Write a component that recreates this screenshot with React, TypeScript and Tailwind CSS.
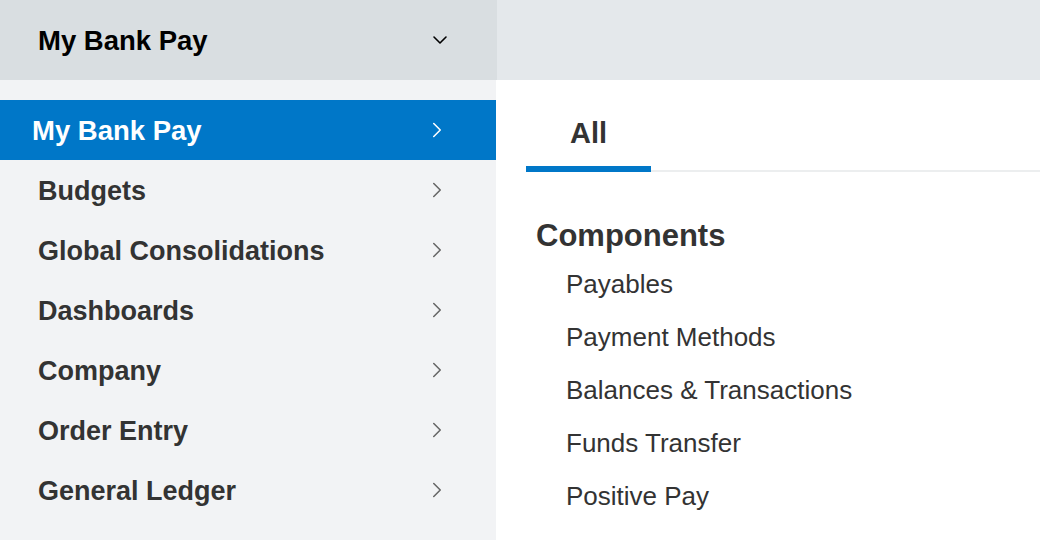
import { ChevronDown, ChevronRight } from "lucide-react";

const menu = [
  "My Bank Pay",
  "Budgets",
  "Global Consolidations",
  "Dashboards",
  "Company",
  "Order Entry",
  "General Ledger",
  "Accounts Receivable",
];

const components = [
  "Payables",
  "Payment Methods",
  "Balances & Transactions",
  "Funds Transfer",
  "Positive Pay",
];

export default function App() {
  return (
    <div
      className="flex h-[540px] w-[1040px] flex-col overflow-hidden bg-white text-[#333]"
      style={{ fontFamily: "'Liberation Sans', Arial, sans-serif" }}
    >
      {/* Top bar */}
      <header className="flex h-20 shrink-0 bg-[#e4e8eb]">
        <div className="flex w-[497px] items-center justify-between bg-[#d9dee1] pl-[38px] pr-[45px]">
          <span className="pt-[2px] text-[27.5px] font-bold text-black">My Bank Pay</span>
          <ChevronDown className="h-6 w-6 text-black" strokeWidth={1.6} />
        </div>
      </header>

      <div className="flex min-h-0 flex-1">
        {/* Sidebar */}
        <nav className="w-[496px] shrink-0 bg-[#f2f3f5] pt-5">
          {menu.map((item, i) => {
            const active = i === 0;
            return (
              <div
                key={item}
                className={`flex h-[60px] items-center justify-between pr-[46px] ${
                  active ? "bg-[#0077c8] pl-[32px] text-white" : "pl-[38px] text-[#333]"
                }`}
              >
                <span className={`${active ? "text-[27.5px]" : "text-[27px]"} pt-[2px] font-bold`}>{item}</span>
                <ChevronRight
                  className={`h-[26px] w-[26px] ${active ? "text-white" : "text-[#666]"}`}
                  strokeWidth={1.4}
                />
              </div>
            );
          })}
        </nav>

        {/* Content */}
        <main className="flex-1 pl-[30px] pt-[15px]">
          <div className="flex border-b-2 border-[#eceeef]">
            <div className="-mb-[2px] flex h-[77px] w-[125px] items-center justify-center border-b-[6px] border-[#0077c8] pt-[6px]">
              <span className="text-[29px] font-bold">All</span>
            </div>
          </div>

          <h2 className="ml-[10px] mt-[46px] text-[31px] font-bold leading-[36px]">Components</h2>
          <ul className="ml-[40px] mt-[4px]">
            {components.map((c) => (
              <li key={c} className="h-[53px] text-[26px] leading-[53px]">
                {c}
              </li>
            ))}
          </ul>
        </main>
      </div>
    </div>
  );
}
